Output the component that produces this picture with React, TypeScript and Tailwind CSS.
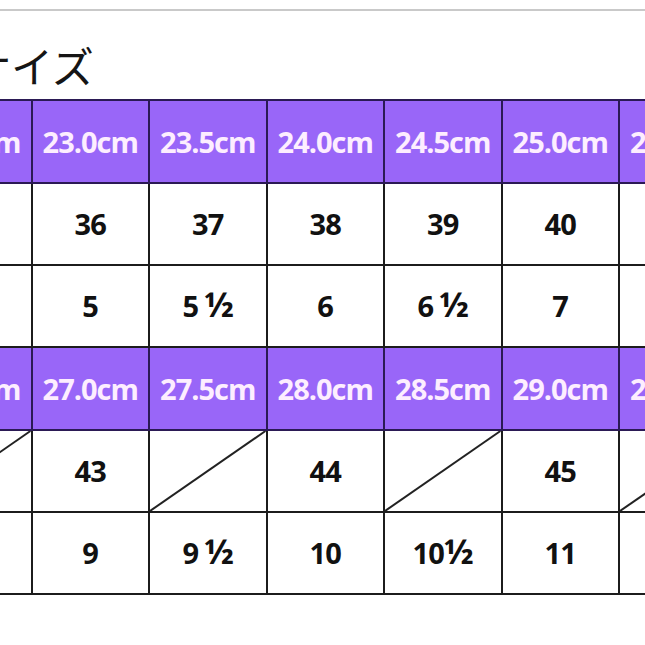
const SECTIONS = [
  {
    sizes: ['22.5cm', '23.0cm', '23.5cm', '24.0cm', '24.5cm', '25.0cm', '25.5cm'],
    eu: ['35', '36', '37', '38', '39', '40', '41'],
    us: ['4|½', '5', '5|½', '6', '6|½', '7', '7|½'],
  },
  {
    sizes: ['26.5cm', '27.0cm', '27.5cm', '28.0cm', '28.5cm', '29.0cm', '29.5cm'],
    eu: ['', '43', '', '44', '', '45', ''],
    us: ['8|½', '9', '9|½', '10', '10½', '11', '11½'],
  },
];

const headCell =
  'w-[117.5px] border-2 border-[#2b1a55] bg-[#9966f8] p-0 text-center align-middle text-[29px] font-bold tracking-[-1px] text-[#fdeeff]';
const bodyCell =
  'relative w-[117.5px] border-2 border-[#1c1c1c] bg-white p-0 text-center align-middle text-[29px] font-bold tracking-[-0.8px] text-[#111]';

function Slash() {
  return (
    <svg className="absolute inset-0 h-full w-full" preserveAspectRatio="none" viewBox="0 0 100 100">
      <line x1="0" y1="100" x2="100" y2="0" stroke="#222" strokeWidth="2" vectorEffect="non-scaling-stroke" />
    </svg>
  );
}

// "5|½" → 5, small gap, enlarged half glyph
function UsSize({ v }: { v: string }) {
  const spaced = v.includes('|');
  const [whole, half] = spaced ? v.split('|') : v.endsWith('½') ? [v.slice(0, -1), '½'] : [v, ''];
  return (
    <span>
      {whole}
      {half && (
        <span className={`text-[34px] leading-none ${spaced ? 'ml-[6px]' : ''}`}>{half}</span>
      )}
    </span>
  );
}

export default function App() {
  return (
    <div className="h-[645px] w-[645px] overflow-hidden bg-white" style={{ fontFamily: '"Open Sans", "Noto Sans CJK JP", sans-serif' }}>
      <div className="h-[9px]" />
      <div className="h-[2px] bg-[#c9c9c9]" />
      <div
        className="ml-[-31px] mt-[33px] h-[42px] text-[42px] leading-none text-[#151515]"
        style={{ fontFamily: '"Noto Sans CJK JP", sans-serif' }}
      >
        サイズ
      </div>
      <table className="mt-[13px] ml-[-87px] w-[823px] table-fixed border-collapse">
        <tbody>
          {SECTIONS.map((s, si) => (
            <Section key={si} sizes={s.sizes} eu={s.eu} us={s.us} />
          ))}
        </tbody>
      </table>
    </div>
  );
}

function Section({ sizes, eu, us }: { sizes: string[]; eu: string[]; us: string[] }) {
  return (
    <>
      <tr className="h-[83px]">
        {sizes.map((v) => (
          <td key={v} className={headCell}>
            {v}
          </td>
        ))}
      </tr>
      <tr className="h-[82px]">
        {eu.map((v, i) => (
          <td key={i} className={bodyCell}>
            {v === '' ? <Slash /> : v}
          </td>
        ))}
      </tr>
      <tr className="h-[82px]">
        {us.map((v, i) => (
          <td key={i} className={bodyCell}>
            <UsSize v={v} />
          </td>
        ))}
      </tr>
    </>
  );
}
